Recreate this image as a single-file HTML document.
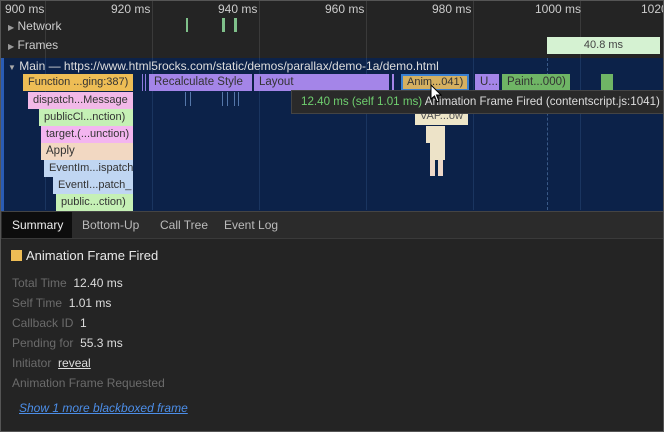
<!DOCTYPE html>
<html><head><meta charset="utf-8"><style>
*{margin:0;padding:0;box-sizing:border-box}
body{width:664px;height:432px;background:#242424;font-family:"Liberation Sans",sans-serif;overflow:hidden;position:relative;color:#ddd}
.a{position:absolute}
.t{font-size:12px;color:#ccc;white-space:nowrap}
.b{position:absolute;height:17px;font-size:11.5px;line-height:17px;color:#333;white-space:nowrap;overflow:hidden;padding-left:5px;border-right:1px solid #0b2247}
.g{position:absolute;top:0;width:1px;background:#3a3a3a;height:58px}
.gm{position:absolute;top:58px;width:1px;background:#1a3560;height:152px}
.k{color:#6b6b6b}
.v{color:#ddd}
</style></head><body>
<div class="a" style="left:0;top:0;width:664px;height:58px;background:#242424"></div>
<div class="a" style="left:0;top:58px;width:664px;height:153px;background:#0c2249"></div>
<div class="a" style="left:0;top:58px;width:4px;height:153px;background:#2a5cb5"></div>
<div class="g" style="left:45px"></div><div class="g" style="left:152px"></div><div class="g" style="left:259px"></div><div class="g" style="left:366px"></div><div class="g" style="left:473px"></div><div class="g" style="left:580px"></div>
<div class="gm" style="left:45px"></div><div class="gm" style="left:152px"></div><div class="gm" style="left:259px"></div><div class="gm" style="left:366px"></div><div class="gm" style="left:473px"></div><div class="gm" style="left:580px"></div>
<div class="a" style="left:547px;top:58px;height:152px;border-left:1px dashed #3a5a88"></div>
<div class="a t" style="left:5px;top:2px">900 ms</div>
<div class="a t" style="left:111px;top:2px">920 ms</div>
<div class="a t" style="left:218px;top:2px">940 ms</div>
<div class="a t" style="left:325px;top:2px">960 ms</div>
<div class="a t" style="left:432px;top:2px">980 ms</div>
<div class="a t" style="left:535px;top:2px">1000 ms</div>
<div class="a t" style="left:641px;top:2px">1020</div>
<div class="a t" style="left:8px;top:19px"><span style="font-size:8px;color:#999">▶</span> Network</div>
<div class="a t" style="left:8px;top:38px"><span style="font-size:8px;color:#999">▶</span> Frames</div>
<div class="a" style="left:186px;top:18px;width:2px;height:14px;background:#7fc08a"></div>
<div class="a" style="left:222px;top:18px;width:3px;height:14px;background:#7fc08a"></div>
<div class="a" style="left:234px;top:18px;width:3px;height:14px;background:#7fc08a"></div>
<div class="a" style="left:547px;top:37px;width:113px;height:17px;background:#d5f2d2;color:#444;font-size:11px;line-height:17px;text-align:center">40.8 ms</div>
<div class="a t" style="left:8px;top:59px;color:#ddd"><span style="font-size:8px;color:#aaa">▼</span> Main — https://www.html5rocks.com/static/demos/parallax/demo-1a/demo.html</div>
<div class="b" style="left:23px;top:74px;width:111px;background:#eebd55;font-size:11px">Function ...ging:387)</div>
<div class="a" style="left:142px;top:74px;width:1px;height:17px;background:#8f7adf"></div>
<div class="a" style="left:145px;top:74px;width:1px;height:17px;background:#8f7adf"></div>
<div class="b" style="left:149px;top:74px;width:104px;background:#a485e8">Recalculate Style</div>
<div class="b" style="left:254px;top:74px;width:136px;background:#a485e8">Layout</div>
<div class="a" style="left:392px;top:74px;width:2px;height:17px;background:#a485e8"></div>
<div class="b" style="left:401px;top:74px;width:68px;background:#d5b060;border:2px solid #3a7fd0;line-height:13px;padding-left:4px;font-size:11px">Anim...041)</div>
<div class="b" style="left:475px;top:74px;width:25px;background:#a485e8">U...</div>
<div class="b" style="left:502px;top:74px;width:69px;background:#6fb565">Paint...000)</div>
<div class="a" style="left:601px;top:74px;width:12px;height:17px;background:#6fb565"></div>
<div class="b" style="left:28px;top:92px;width:106px;background:#f2b9e8;font-size:11px">dispatch...Message</div>
<div class="b" style="left:39px;top:109px;width:95px;background:#c5f0b5;font-size:11px">publicCl...nction)</div>
<div class="b" style="left:41px;top:126px;width:93px;background:#f3b5f0;font-size:11px">target.(...unction)</div>
<div class="b" style="left:41px;top:143px;width:93px;background:#f2d8c2">Apply</div>
<div class="b" style="left:44px;top:160px;width:90px;background:#c0d6f2;font-size:11px">EventIm...ispatch</div>
<div class="b" style="left:53px;top:177px;width:81px;background:#c0d6f2;font-size:11px">EventI...patch_</div>
<div class="b" style="left:56px;top:194px;width:78px;background:#c5f0b5;font-size:11px">public...ction)</div>
<div class="a" style="left:185px;top:92px;width:1px;height:14px;background:#5577aa"></div>
<div class="a" style="left:190px;top:92px;width:1px;height:14px;background:#5577aa"></div>
<div class="a" style="left:222px;top:92px;width:1px;height:14px;background:#5577aa"></div>
<div class="a" style="left:227px;top:92px;width:1px;height:14px;background:#5577aa"></div>
<div class="a" style="left:234px;top:92px;width:1px;height:14px;background:#5577aa"></div>
<div class="a" style="left:238px;top:92px;width:1px;height:14px;background:#5577aa"></div>
<div class="a" style="left:415px;top:110px;width:53px;height:15px;background:#eee6c8;color:#555;font-size:11px;line-height:13px;text-align:center">VAP...ow</div>
<div class="a" style="left:426px;top:126px;width:19px;height:17px;background:#ede3c8"></div>
<div class="a" style="left:430px;top:143px;width:15px;height:17px;background:#ede3c8"></div>
<div class="a" style="left:430px;top:160px;width:5px;height:16px;background:#eed8c8"></div>
<div class="a" style="left:438px;top:160px;width:5px;height:16px;background:#eed8c8"></div>
<div class="a" style="left:291px;top:90px;width:373px;height:24px;background:#2a2a2a;border:1px solid #444;font-size:11.6px;line-height:22px;padding-left:9px;white-space:nowrap;color:#ddd;overflow:hidden"><span style="color:#6fcf6f">12.40 ms (self 1.01 ms)</span> Animation Frame Fired (contentscript.js:1041)</div>
<svg class="a" style="left:430px;top:84px" width="14" height="20" viewBox="0 0 14 20"><path d="M1 1 L1 15 L4.5 12 L7 18 L9 17 L6.5 11 L11 11 Z" fill="#fff" stroke="#000" stroke-width="1"/></svg>
<div class="a" style="left:0;top:211px;width:664px;height:28px;background:#2b2b2b;border-top:1px solid #444;border-bottom:1px solid #3a3a3a"></div>
<div class="a" style="left:2px;top:212px;width:70px;height:26px;background:#0d0d0d"></div>
<div class="a" style="left:12px;top:218px;font-size:12px;color:#eee">Summary</div>
<div class="a" style="left:82px;top:218px;font-size:12px;color:#bbb">Bottom-Up</div>
<div class="a" style="left:160px;top:218px;font-size:12px;color:#bbb">Call Tree</div>
<div class="a" style="left:224px;top:218px;font-size:12px;color:#bbb">Event Log</div>
<div class="a" style="left:11px;top:250px;width:11px;height:11px;background:#eebd55"></div>
<div class="a" style="left:26px;top:248px;font-size:13px;color:#e8e8e8">Animation Frame Fired</div>
<div class="a" style="left:12px;top:276px;font-size:12px"><span class="k">Total Time</span> &nbsp;<span class="v">12.40 ms</span></div>
<div class="a" style="left:12px;top:296px;font-size:12px"><span class="k">Self Time</span> &nbsp;<span class="v">1.01 ms</span></div>
<div class="a" style="left:12px;top:316px;font-size:12px"><span class="k">Callback ID</span> &nbsp;<span class="v">1</span></div>
<div class="a" style="left:12px;top:336px;font-size:12px"><span class="k">Pending for</span> &nbsp;<span class="v">55.3 ms</span></div>
<div class="a" style="left:12px;top:356px;font-size:12px"><span class="k">Initiator</span> &nbsp;<span class="v" style="text-decoration:underline">reveal</span></div>
<div class="a" style="left:12px;top:376px;font-size:12px"><span class="k">Animation Frame Requested</span></div>
<div class="a" style="left:19px;top:401px;font-size:12px;color:#4c8ee8;font-style:italic;text-decoration:underline">Show 1 more blackboxed frame</div>
<div class="a" style="left:0;top:0;width:664px;height:432px;border:1px solid #555"></div>
</body></html>
